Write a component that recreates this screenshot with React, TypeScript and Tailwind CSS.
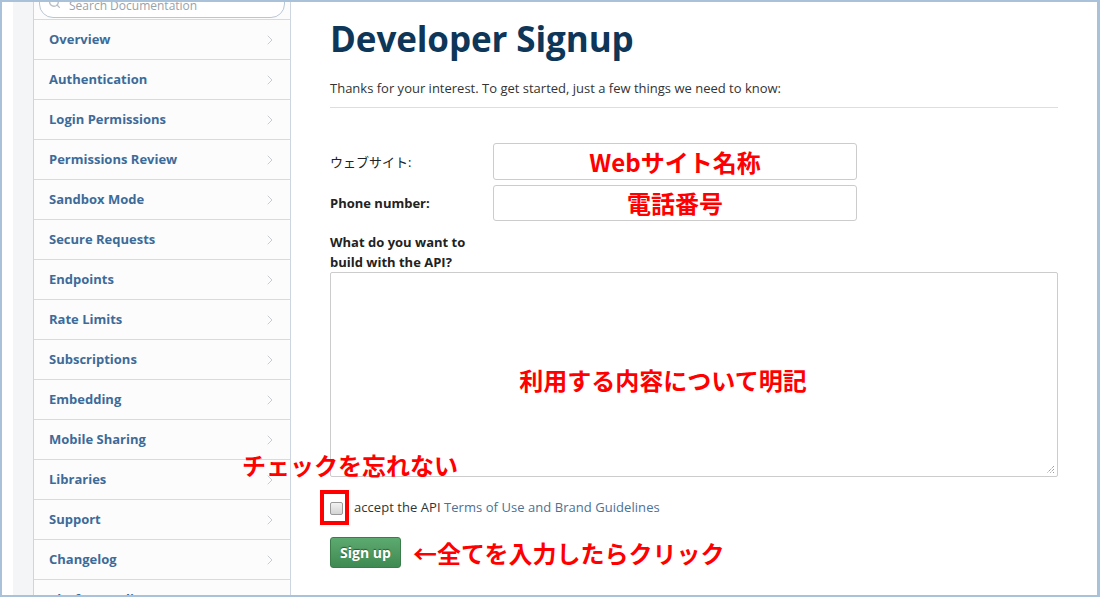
import { ChevronRight, Search } from "lucide-react";

const NAV = [
  "Overview",
  "Authentication",
  "Login Permissions",
  "Permissions Review",
  "Sandbox Mode",
  "Secure Requests",
  "Endpoints",
  "Rate Limits",
  "Subscriptions",
  "Embedding",
  "Mobile Sharing",
  "Libraries",
  "Support",
  "Changelog",
  "Platform Policy",
];

const body = "font-['Open_Sans','Noto_Sans_CJK_JP',sans-serif]";
const note = "font-['Noto_Sans_CJK_JP',sans-serif] font-bold text-[24px] text-[#ff0000] leading-none";

function Sidebar() {
  return (
    <aside className="flex h-full shrink-0">
      <div className="w-[11px] bg-white" />
      <div className="w-[20px] bg-[#f4f5f7]" />
      <nav className="w-[258px] border-x border-[#cdd6e0] bg-[#fcfcfd]">
        <div className="h-[17px] overflow-hidden px-[5px]">
          <div className="-mt-[18px] flex h-[34px] items-end gap-2 rounded-[14px] border border-[#b9c6d4] bg-white px-[8px] pb-[5px]">
            <Search size={13} strokeWidth={2.5} className="mb-[3px] text-[#b8bec6]" />
            <span className="text-[12px] leading-none text-[#9aa1aa]">Search Documentation</span>
          </div>
        </div>
        {NAV.map((item) => (
          <div
            key={item}
            className="flex h-[40px] items-center justify-between border-t border-[#d3dbe4] pl-[15px] pr-[12px]"
          >
            <span className="text-[13px] font-bold text-[#3d6b99]">{item}</span>
            <ChevronRight size={16} strokeWidth={1.5} className="text-[#c9ccd0]" />
          </div>
        ))}
      </nav>
    </aside>
  );
}

function Field({ label, bold, hint, height }: { label: string; bold?: boolean; hint: string; height: string }) {
  return (
    <div className={`flex items-center ${height}`}>
      <label className={`w-[163px] pt-[2px] text-[13px] text-[#222] ${bold ? "font-bold" : ""}`}>{label}</label>
      <div className="flex h-full w-[364px] items-center justify-center rounded-[3px] border border-[#cccccc] bg-white">
        <span className={note}>{hint}</span>
      </div>
    </div>
  );
}

export default function App() {
  return (
    <div className={`relative flex h-[597px] w-[1100px] overflow-hidden border-2 border-r-[3px] border-[#a9c1d9] bg-white ${body}`}>
      <Sidebar />
      <main className="flex-1 px-[39px]">
        <div className="flex h-[72px] items-center">
          <h1 className="text-[35px] font-bold leading-none tracking-[-0.1px] text-[#0e3658]">Developer Signup</h1>
        </div>
        <p className="mt-[4px] h-[20px] text-[13px] leading-[20px] text-[#333]">
          Thanks for your interest. To get started, just a few things we need to know:
        </p>
        <div className="mt-[9px] border-t border-[#dedede]" />

        <div className="mt-[35px] flex flex-col gap-[5px]">
          <Field label="ウェブサイト:" hint="Webサイト名称" height="h-[37px]" />
          <Field label="Phone number:" bold hint="電話番号" height="h-[36px]" />
        </div>

        <p className="mt-[11px] text-[13px] font-bold leading-[20px] text-[#222]">
          What do you want to
          <br />
          build with the API?
        </p>
        <div className="relative flex h-[205px] items-center justify-center rounded-[2px] border border-[#cccccc] bg-white pr-[62px] pt-[10px]">
          <span className={note}>利用する内容について明記</span>
          <svg className="absolute bottom-[2px] right-[2px]" width="9" height="9" viewBox="0 0 9 9">
            <path d="M8 1L1 8M8 4L4 8M8 7L7 8" stroke="#777" strokeWidth="1" strokeDasharray="1 1" />
          </svg>
        </div>

        <div className="mt-[21px] flex h-[20px] items-center">
          <span className="relative flex h-[13px] w-[13px]">
            <span className="h-full w-full rounded-[2px] border border-[#9a9a9a] bg-gradient-to-b from-[#f2f2f2] to-[#d4d4d4]" />
            <span className="absolute -left-[10px] -top-[12px] h-[35px] w-[29px] border-4 border-[#ff0000]" />
          </span>
          <span className="ml-[11px] text-[13px] tracking-[0.05px] text-[#333]">
            accept the API <span className="text-[#4b7196]">Terms of Use and Brand Guidelines</span>
          </span>
        </div>

        <div className="mt-[19px] flex items-center gap-[12px]">
          <button className="h-[31px] w-[71px] rounded-[3px] border border-[#3a7d4b] bg-gradient-to-b from-[#5daa70] to-[#3f8a52] text-[14px] font-bold text-white [text-shadow:0_-1px_1px_rgba(0,0,0,0.45)]">
            Sign up
          </button>
          <span className={note}>←全てを入力したらクリック</span>
        </div>
      </main>
      <span className={`absolute left-[240px] top-[451px] ${note}`}>チェックを忘れない</span>
    </div>
  );
}
